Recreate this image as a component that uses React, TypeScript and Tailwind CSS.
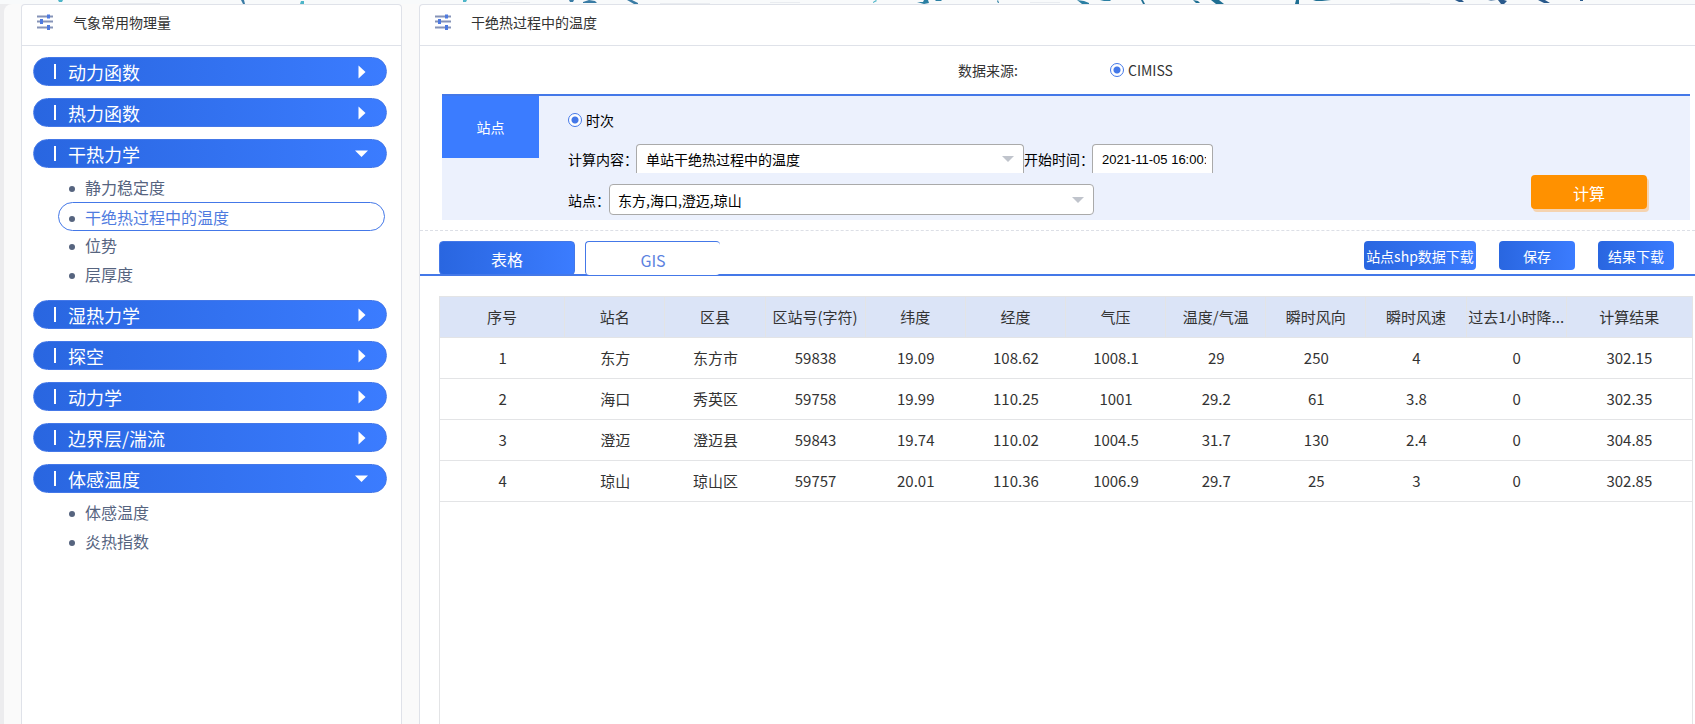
import React, { useState } from 'react';

type Group = { title: string; items: string[] };

const groups: Group[] = [
  { title: '动力函数', items: [] },
  { title: '热力函数', items: [] },
  { title: '干热力学', items: ['静力稳定度', '干绝热过程中的温度', '位势', '层厚度'] },
  { title: '湿热力学', items: [] },
  { title: '探空', items: [] },
  { title: '动力学', items: [] },
  { title: '边界层/湍流', items: [] },
  { title: '体感温度', items: ['体感温度', '炎热指数'] },
];

const columns = [
  '序号', '站名', '区县', '区站号(字符)', '纬度', '经度', '气压',
  '温度/气温', '瞬时风向', '瞬时风速', '过去1小时降...', '计算结果',
];

const rows = [
  ['1', '东方', '东方市', '59838', '19.09', '108.62', '1008.1', '29', '250', '4', '0', '302.15'],
  ['2', '海口', '秀英区', '59758', '19.99', '110.25', '1001', '29.2', '61', '3.8', '0', '302.35'],
  ['3', '澄迈', '澄迈县', '59843', '19.74', '110.02', '1004.5', '31.7', '130', '2.4', '0', '304.85'],
  ['4', '琼山', '琼山区', '59757', '20.01', '110.36', '1006.9', '29.7', '25', '3', '0', '302.85'],
];

const SlidersIcon = () => (
  <svg width="16" height="16" viewBox="0 0 16 16" aria-hidden="true">
    <path d="M0 2.5h16M0 7.5h16M0 13.5h16" stroke="#8593b8" strokeWidth="1.8" />
    <path d="M11.5 .5v4M4.5 5v5M11.5 11v5" stroke="#4f7be0" strokeWidth="3" />
  </svg>
);

const Caret = () => (
  <svg className="pointer-events-none absolute right-2.5 top-1/2 -mt-[3px]" width="12" height="6" viewBox="0 0 12 6" aria-hidden="true">
    <path d="M0 0h12L6 6z" fill="#c0c4cc" />
  </svg>
);

const TopBanner = () => (
  <svg className="block h-1 w-full bg-[#f8fafb]" viewBox="0 0 1695 4" preserveAspectRatio="none" aria-hidden="true">
    <path d="M58 0h5l-1 2h-3zM300 4l1-3h3v3zM463 0h4l-1 2h-3zM873 2l3-2 1 1-4 2z" fill="#4db5c8" />
    <path d="M241 0h3l1 4h-2zM569 0h5l-1 2h-3zM583 2l6-2 6 1 2 2h-14zM627 0l5 0 6 3v1h-4z" fill="#3a7ca5" />
    <path d="M917 2l6 0 1-2 4 0 1 3-5 1zM935 0h7l-1 1h-5zM997 1l1-1 1 3h-1zM1077 0l7 1 5 2v1h-7zM1100 1l4-1h7l-1 1h-6z" fill="#2b7fa3" />
    <path d="M1141 0h2l2 4h-2zM1193 0l5 1 2 2h-4zM1211 0h8l5 4h-8zM1296 0h3v4h-4zM1313 0h9l9 1h-15z" fill="#1f6f93" />
    <path d="M1455 0h7l2 2h-5zM1488 0l8 1h-5zM1498 0h6l3 1-3 3h-3zM1538 0h7l5 3h-6zM1580 0h3v1h-3z" fill="#2a5a8c" />
    <path d="M120 3h40v1h-40zM500 2h30v1h-30zM660 3h50v1h-50zM770 2h30v1h-30zM1030 2h30v1h-30zM1390 3h40v1h-40z" fill="#e9ecf0" />
  </svg>
);

const PanelHeader = ({ title }: { title: string }) => (
  <div className="flex h-[41px] shrink-0 items-center gap-5 border-b border-[#dfe2e9] pb-1.5 pl-[15px]">
    <SlidersIcon />
    <h2 className="text-sm text-[#333]">{title}</h2>
  </div>
);

const Radio = ({ name, label }: { name: string; label: string }) => (
  <label className="flex items-center gap-1">
    <input
      type="radio"
      name={name}
      defaultChecked
      className="size-3.5 appearance-none rounded-full border border-[#4478e8] bg-white checked:bg-[radial-gradient(circle,#4478e8_0_3px,#fff_4px)]"
    />
    {label}
  </label>
);

const Sidebar = () => {
  const [open, setOpen] = useState<string[]>(['干热力学', '体感温度']);
  const [active, setActive] = useState('干绝热过程中的温度');

  const toggle = (title: string) =>
    setOpen(open.includes(title) ? open.filter((t) => t !== title) : [...open, title]);

  return (
    <aside className="w-[381px] shrink-0 rounded-t border border-b-0 border-[#dfe2e9] bg-white">
      <PanelHeader title="气象常用物理量" />
      <nav className="flex flex-col gap-3 pl-[11px] pr-[14px] pt-[11px]">
        {groups.map((group) => {
          const isOpen = open.includes(group.title);
          return (
            <div key={group.title}>
              <button
                type="button"
                aria-expanded={isOpen}
                onClick={() => toggle(group.title)}
                className="flex h-[29px] w-full items-center rounded-full border border-[#4478e8] bg-linear-to-r from-[#2966e0] to-[#3b7cff] pl-5 pr-[18px] text-lg text-white"
              >
                <span className="mr-3 h-[15px] w-0.5 bg-white" />
                <span className="leading-none">{group.title}</span>
                <svg className="ml-auto" width="14" height="14" viewBox="0 0 14 14" aria-hidden="true">
                  <path d={isOpen ? 'M1 3.5h13L7.5 10z' : 'M4.5 0.5l7 6.5-7 6.5z'} fill="#fff" />
                </svg>
              </button>
              {isOpen && group.items.length > 0 && (
                <ul className="-mb-px ml-[25px] mr-0.5 pt-[5px]">
                  {group.items.map((item) => (
                    <li key={item}>
                      <a
                        href="#"
                        onClick={() => setActive(item)}
                        className={
                          item === active
                            ? 'flex h-[29px] items-center gap-2.5 rounded-full border border-[#4478e8] pl-2.5 text-base text-[#4f7be0]'
                            : 'flex h-[29px] items-center gap-2.5 rounded-full border border-transparent pb-0.5 pl-2.5 text-base text-[#56647f]'
                        }
                      >
                        <span className="mt-1 size-1.5 rounded-full bg-[#56647f]" />
                        {item}
                      </a>
                    </li>
                  ))}
                </ul>
              )}
            </div>
          );
        })}
      </nav>
    </aside>
  );
};

const QueryForm = () => (
  <form className="ml-[22px] mr-[5px] flex border-t-2 border-[#4478e8] bg-[#ecf1fd] text-sm text-black">
    <button type="button" className="h-[62px] w-[97px] shrink-0 bg-[#3b7cff] text-white">站点</button>
    <div className="pb-[5px] pl-[29px]">
      <div className="flex h-12 items-center">
        <Radio name="mode" label="时次" />
      </div>
      <div className="mb-[11px] flex h-[29px] items-center">
        <label htmlFor="content" className="w-[68px] whitespace-nowrap">计算内容：</label>
        <div className="relative h-full w-[388px]">
          <select id="content" className="size-full appearance-none rounded-t border border-b-0 border-[#aaa] bg-white pl-[9px] pr-8">
            <option>单站干绝热过程中的温度</option>
          </select>
          <Caret />
        </div>
        <label htmlFor="start" className="w-[68px] whitespace-nowrap">开始时间：</label>
        <input
          id="start"
          type="text"
          defaultValue="2021-11-05 16:00:00"
          className="h-full w-[121px] rounded-t border border-b-0 border-[#aaa] bg-white pl-[9px] pr-1.5 font-['Liberation_Sans',sans-serif] text-[13px]"
        />
      </div>
      <div className="flex h-[31px] items-center">
        <label htmlFor="station" className="w-[41px] whitespace-nowrap">站点：</label>
        <div className="relative h-full w-[485px]">
          <select id="station" className="size-full appearance-none rounded border border-[#aaa] bg-white pl-2 pr-8">
            <option>东方,海口,澄迈,琼山</option>
          </select>
          <Caret />
        </div>
      </div>
    </div>
    <button
      type="button"
      className="mb-[11px] ml-auto mr-[43px] h-[34px] w-[116px] self-end rounded bg-[#ff9100] pt-0.5 text-base text-white shadow-[2px_3px_0_#f5d3b0]"
    >
      计算
    </button>
  </form>
);

const ACTION = 'h-[29px] rounded bg-linear-to-r from-[#2966e0] to-[#3b7cff] text-sm whitespace-nowrap text-white';

const ResultTabs = () => (
  <div className="flex h-[45px] items-start border-b-2 border-[#4478e8] pl-[19px] pr-[21px] pt-2.5">
    <div className="flex gap-2.5">
      <button type="button" className="h-[34px] w-[136px] rounded border border-[#4478e8] bg-linear-to-r from-[#2966e0] to-[#3b7cff] pt-0.5 text-base text-white">
        表格
      </button>
      <button type="button" className="h-[34px] w-[135px] rounded border-l border-t border-[#4478e8] bg-white pt-0.5 text-base text-[#5b82e0]">
        GIS
      </button>
    </div>
    <div className="ml-auto flex gap-[23px]">
      <button type="button" className={`${ACTION} w-28`}>站点shp数据下载</button>
      <button type="button" className={`${ACTION} w-[76px]`}>保存</button>
      <button type="button" className={`${ACTION} w-[76px]`}>结果下载</button>
    </div>
  </div>
);

const ResultTable = () => (
  <div className="ml-[19px] mr-0.5 mt-5 flex-1 border border-b-0 border-[#e3e4e6]">
    <table className="w-full table-fixed border-separate border-spacing-0 text-center text-[15px] text-[#333]">
      <colgroup>
        {columns.map((name, i) => (
          <col key={name} className={i === 0 || i === columns.length - 1 ? 'w-[10%]' : 'w-[8%]'} />
        ))}
      </colgroup>
      <thead>
        <tr className="h-[41px] bg-[#dbe4f7]">
          {columns.map((name) => (
            <th key={name} className="whitespace-nowrap border-b border-r border-[#e3e4e6] font-normal last:border-r-0">{name}</th>
          ))}
        </tr>
      </thead>
      <tbody>
        {rows.map((row) => (
          <tr key={row[0]} className="h-[41px]">
            {row.map((cell, i) => (
              <td key={columns[i]} className="border-b border-[#e3e4e6]">{cell}</td>
            ))}
          </tr>
        ))}
      </tbody>
    </table>
  </div>
);

const App = () => (
  <div className="flex min-h-screen flex-col font-['Noto_Sans_CJK_SC',sans-serif]">
    <TopBanner />
    <div className="flex flex-1 bg-[#ececee] pl-1">
      <div className="flex flex-1 gap-[17px] rounded-tl-lg bg-[#fafafa] pl-[17px]">
        <Sidebar />
        <main className="flex min-w-0 flex-1 flex-col rounded-tl border-l border-t border-[#dfe2e9] bg-white">
          <PanelHeader title="干绝热过程中的温度" />
          <div className="flex h-12 items-center justify-center gap-[92px] pl-4 text-sm text-[#333]">
            <span>数据来源:</span>
            <Radio name="source" label="CIMISS" />
          </div>
          <QueryForm />
          <div className="mt-2.5 border-t border-dashed border-[#dcdfe6]" />
          <ResultTabs />
          <ResultTable />
        </main>
      </div>
    </div>
  </div>
);

export default App;
